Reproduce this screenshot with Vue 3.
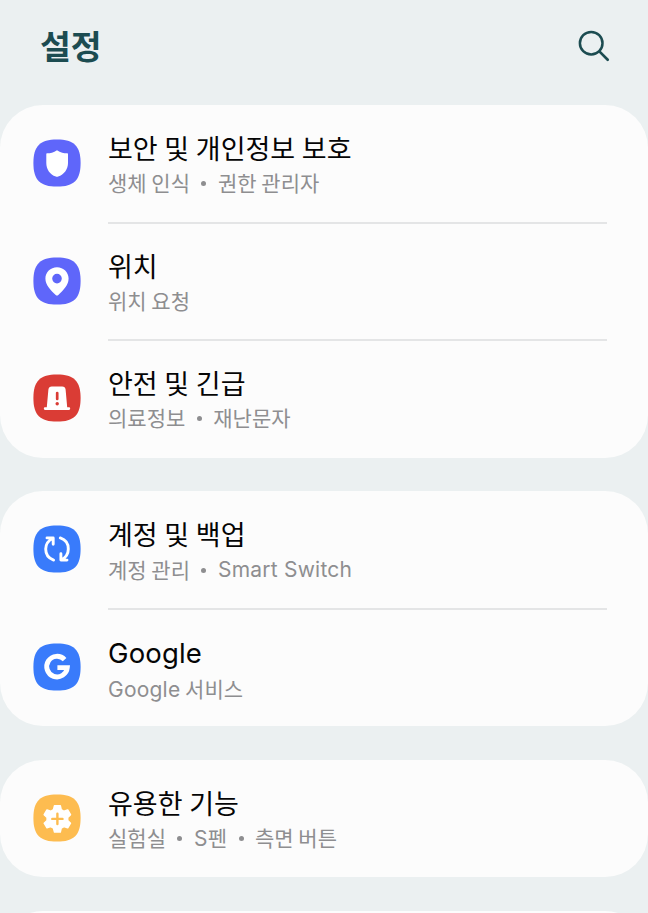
<script setup>
const groups = [
  [
    { icon: 'shield', color: '#5f66fa', title: '보안 및 개인정보 보호', details: ['생체 인식', '권한 관리자'] },
    { icon: 'pin', color: '#5f66fa', title: '위치', details: ['위치 요청'] },
    { icon: 'siren', color: '#da3c35', title: '안전 및 긴급', details: ['의료정보', '재난문자'] },
  ],
  [
    { icon: 'sync', color: '#397bfb', title: '계정 및 백업', details: ['계정 관리', 'Smart Switch'] },
    { icon: 'google', color: '#397bfb', title: 'Google', details: ['Google 서비스'] },
  ],
  [
    { icon: 'gear', color: '#fdbc50', title: '유용한 기능', details: ['실험실', 'S펜', '측면 버튼'] },
  ],
]

// Latin runs are set in their own face, next to the Korean one.
const runs = (text) => text.match(/[A-Za-z]+(?: [A-Za-z]+)*|[^A-Za-z]+/g)
const isLatin = (text) => /[A-Za-z]/.test(text)
</script>

<template>
  <div class="screen">
    <header class="header">
      <h1>설정</h1>
      <svg class="search" viewBox="0 0 34 34" fill="none" stroke="#1c4c51" stroke-linecap="round">
        <circle cx="14.2" cy="14.2" r="11.3" stroke-width="2.5" />
        <path d="M22.6 22.6L30.7 30.7" stroke-width="2.7" />
      </svg>
    </header>
    <main class="groups">
      <section v-for="(group, g) in groups" :key="g" class="card">
        <div v-for="row in group" :key="row.title" class="row">
          <svg class="icon" viewBox="0 0 48 48">
            <path :fill="row.color" d="M24 .4C41 .4 47.6 7 47.6 24S41 47.6 24 47.6 .4 41 .4 24 7 .4 24 .4Z" />
            <path v-if="row.icon === 'shield'" fill="#fff" d="M24 11.2C27.5 13.5 31 14.2 34 14.3C34.7 14.3 35 14.7 35 15.3V24C35 30.5 31 35.4 25.2 37.6Q24 38 22.8 37.6C17 35.4 13.3 30.5 13.3 24V15.3C13.3 14.7 13.6 14.3 14.3 14.3C17.3 14.2 20.5 13.5 24 11.2Z" />
            <path v-else-if="row.icon === 'pin'" fill="#fff" fill-rule="evenodd" d="M24 10.2C17.5 10.2 12.4 15.2 12.4 21.5C12.4 28 18 33.5 22.7 38Q24 39.2 25.3 38C30 33.5 35.6 28 35.6 21.5C35.6 15.2 30.5 10.2 24 10.2ZM24 16.8A4.8 4.8 0 1 1 24 26.4A4.8 4.8 0 0 1 24 16.8Z" />
            <g v-else-if="row.icon === 'siren'">
              <path fill="#fff" d="M18.8 12.5H29.2Q32.2 12.5 32.6 15.5L34.2 33.2H36Q37.2 33.2 37.2 34.6T36 36H12Q10.8 36 10.8 34.6T12 33.2H13.8L15.4 15.5Q15.8 12.5 18.8 12.5Z" />
              <path :stroke="row.color" stroke-width="2.7" stroke-linecap="round" d="M24.2 19V25" />
              <circle :fill="row.color" cx="24.2" cy="29.8" r="1.7" />
            </g>
            <g v-else-if="row.icon === 'sync'" fill="none" stroke="#fff" stroke-width="2.9" stroke-linecap="round" stroke-linejoin="round">
              <path d="M20.6 35.1C15.8 33.5 12.7 29.5 12.7 24.1C12.7 19.4 15.3 15.5 19.7 13.2M14 12.9H20.2V19.2" />
              <path d="M27.3 12.9C32.1 14.5 35.3 18.6 35.3 23.9C35.3 28.6 32.7 32.5 28.4 34.9M34 35.1H27.9V28.8" />
            </g>
            <path v-else-if="row.icon === 'google'" fill="none" stroke="#fff" stroke-width="4.9" d="M31.6 16.6A10.3 10.3 0 1 0 34.3 24.6H24.4" />
            <g v-else>
              <path fill="#fff" stroke="#fff" stroke-width="1.5" stroke-linejoin="round" d="M21.5 11.7H27.3L28.2 15.7L31 17.3L34.7 16L37.5 20.7L34.7 23.5V26.5L37.5 29.2L34.7 33.8L31 32.6L28.2 34.2L27.3 38H21.5L20.5 34.2L17.7 32.6L14 33.8L11.2 29.2L14.1 26.5V23.5L11.2 20.7L14 16L17.7 17.3L20.5 15.7Z" />
              <path fill="none" :stroke="row.color" stroke-width="2.4" stroke-linecap="round" d="M24.4 19.8V30M19.3 24.9H29.5" />
            </g>
          </svg>
          <div class="text">
            <div class="title"><span v-for="(run, i) in runs(row.title)" :key="i" :class="{ latin: isLatin(run) }">{{ run }}</span></div>
            <div class="details">
              <template v-for="(detail, d) in row.details" :key="detail">
                <i v-if="d" class="dot"></i>
                <span class="detail"><span v-for="(run, i) in runs(detail)" :key="i" :class="{ latin: isLatin(run) }">{{ run }}</span></span>
              </template>
            </div>
          </div>
        </div>
      </section>
      <section class="card next"></section>
    </main>
  </div>
</template>

<style>
body {
  background: #ebf0f1;
}
</style>

<style scoped>
.screen {
  height: 913px;
  overflow: hidden;
  background: #ebf0f1;
  font-family: "Noto Sans CJK KR", sans-serif;
}
.header {
  display: flex;
  align-items: center;
  justify-content: space-between;
  box-sizing: border-box;
  height: 105px;
  padding: 0 37px 13px 40px;
}
h1 {
  margin: 0;
  padding-bottom: 2px;
  color: #1c4c51;
  font-size: 33.5px;
  line-height: 48px;
  font-weight: 700;
}
.search {
  width: 34px;
  height: 34px;
}
.groups {
  display: flex;
  flex-direction: column;
  gap: 33.6px;
}
.card {
  border-radius: 43px;
  background: #fcfcfc;
}
.next {
  height: 117px;
}
.row {
  display: flex;
  box-sizing: border-box;
  height: 117.5px;
  padding-left: 33px;
  padding-right: 41px;
}
.icon {
  flex: none;
  width: 48px;
  height: 48px;
  margin: 34.3px 27px 0 0;
}
.text {
  flex: 1;
  box-sizing: border-box;
  height: 118.7px;
  padding-top: 23px;
}
.row:not(:last-child) .text {
  border-bottom: 2px solid #e4e5e6;
}
.title {
  color: #050505;
  font-size: 27px;
  line-height: 39px;
  word-spacing: 0.6px;
  white-space: pre;
}
.title .latin {
  font-size: 27.5px;
  letter-spacing: 0.15px;
}
.details {
  display: flex;
  align-items: center;
  color: #8e8e90;
  font-size: 21px;
  line-height: 31px;
  white-space: pre;
}
.latin {
  font-family: Inter, sans-serif;
}
.details .latin {
  letter-spacing: 0.22px;
}
.dot {
  width: 5px;
  height: 5px;
  margin: 2px 11.5px 0;
  border-radius: 50%;
  background: #8e8e90;
}
</style>
